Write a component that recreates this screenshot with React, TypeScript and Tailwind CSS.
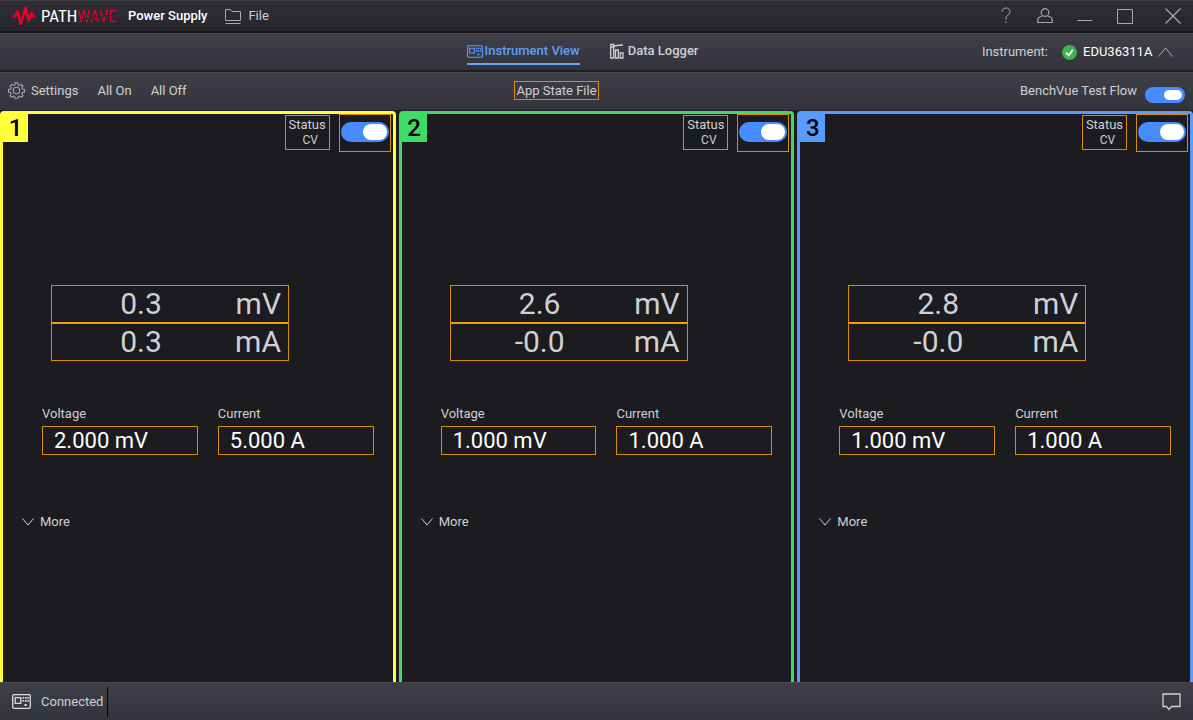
import { useId } from 'react'
import type { ReactNode } from 'react'
import clsx from 'clsx'

interface Channel {
  id: number
  border: string
  badge: string
  volts: string
  amps: string
  voltage: string
  current: string
}

const CHANNELS: Channel[] = [
  { id: 1, border: 'border-[#ffff3c]', badge: 'bg-[#ffff3c]', volts: '0.3', amps: '0.3', voltage: '2.000 mV', current: '5.000 A' },
  { id: 2, border: 'border-[#3ddc68]', badge: 'bg-[#3ddc68]', volts: '2.6', amps: '-0.0', voltage: '1.000 mV', current: '1.000 A' },
  { id: 3, border: 'border-[#5a9bff]', badge: 'bg-[#5a9bff]', volts: '2.8', amps: '-0.0', voltage: '1.000 mV', current: '1.000 A' },
]

const BAR = 'bg-linear-to-b from-[#3f4047] to-[#33343b] border-t border-t-[#4b4c53]'

export default function App() {
  return (
    <div className="flex min-h-screen flex-col bg-[#1c1b20] font-[Roboto,sans-serif] text-[13px] leading-5 text-[#cfd0d3]">
      <TitleBar />
      <NavBar />
      <Toolbar />
      <main className="grid flex-1 grid-cols-3 gap-[3px] bg-[#1c1b20]">
        {CHANNELS.map((channel) => (
          <ChannelPanel key={channel.id} channel={channel} />
        ))}
      </main>
      <StatusBar />
    </div>
  )
}

function TitleBar() {
  return (
    <header className="flex h-[33px] items-center justify-between border-t border-b-2 border-t-[#3e3e44] border-b-[#17171b] bg-linear-to-b from-[#2e2e34] to-[#26262b] px-3">
      <div className="flex items-center">
        <svg width="24" height="20" viewBox="0 0 24 20" fill="none" stroke="#e90029" strokeWidth="2.6" strokeLinejoin="round" strokeLinecap="round">
          <path d="M1.300 10.500h1.700L5.500 5l3.200 12.700L13.500 1.800l3.200 13L19.500 7l1.500 3.500h1.600" />
        </svg>
        <div className="ml-[5px] w-[76px] font-['Liberation_Sans_Narrow','Roboto_Condensed',Roboto,sans-serif] text-[17px] text-white">
          PATH
          <span className="bg-[linear-gradient(172deg,#e90029_52%,transparent_52%,transparent_58%,#e90029_58%)] bg-clip-text text-transparent">WAVE</span>
        </div>
        <h1 className="ml-[11px] font-medium text-white">Power Supply</h1>
        <button className="ml-[18px] flex items-center gap-[7px]">
          <FolderIcon />
          File
        </button>
      </div>
      <div className="flex items-center gap-6 text-[#a6a9b0]">
        <button aria-label="Help">
          <svg width="14" height="18" viewBox="0 0 14 18" fill="none" stroke="currentColor">
            <path d="M3 5c0-2.500 1.700-4 4-4s4 1.500 4 3.800c0 3-4 3.200-4 6.200v1.500M7 14.500V16" />
          </svg>
        </button>
        <button aria-label="Account">
          <svg width="16" height="18" viewBox="0 0 16 18" fill="none" stroke="currentColor" strokeWidth="1.200">
            <circle cx="8" cy="5.500" r="3.800" />
            <path d="M5.500 9C3 9.500.7 11 .7 13.500v2h14.600v-2C15.300 11 13 9.500 10.500 9" />
          </svg>
        </button>
        <button aria-label="Minimize">
          <svg width="16" height="18" viewBox="0 0 16 18" fill="none" stroke="currentColor">
            <path d="M.5 13.500h15" />
          </svg>
        </button>
        <button aria-label="Maximize">
          <svg width="16" height="18" viewBox="0 0 16 18" fill="none" stroke="currentColor">
            <path d="M.5 2.500h15v14H.5z" />
          </svg>
        </button>
        <button aria-label="Close" className="ml-2">
          <svg width="16" height="18" viewBox="0 0 16 18" fill="none" stroke="currentColor" strokeWidth="1.200">
            <path d="M.5 1.500l15 15M15.500 1.500l-15 15" />
          </svg>
        </button>
      </div>
    </header>
  )
}

function NavBar() {
  return (
    <div className={clsx(BAR, 'grid h-[39px] grid-cols-[1fr_auto_1fr] items-center border-b-2 border-b-[#1c1c21]')}>
      <nav className="col-start-2 mr-7 flex gap-[30px] font-medium">
        <button className="flex h-[26px] items-center gap-0.5 border-b-2 border-[#6aa5ff] text-[#5f9dfd]">
          <InstrumentIcon className="h-[13px] w-4" />
          Instrument View
        </button>
        <button className="flex h-[26px] items-center gap-1 border-b-2 border-transparent">
          <LoggerIcon />
          Data Logger
        </button>
      </nav>
      <div className="flex items-center justify-self-end pr-5">
        <label htmlFor="instrument">Instrument:</label>
        <svg className="mr-1.5 ml-3.5" width="15" height="15" viewBox="0 0 15 15" fill="none">
          <circle cx="7.500" cy="7.500" r="7.500" fill="#3db54a" />
          <path d="M4 7.700l2.600 2.700 4.300-5.600" stroke="#fff" strokeWidth="1.700" />
        </svg>
        <div className="relative flex items-center">
          <select id="instrument" className="appearance-none bg-transparent pr-5 text-white">
            <option>EDU36311A</option>
          </select>
          <svg className="pointer-events-none absolute right-0" width="15" height="10" viewBox="0 0 15 10" fill="none" stroke="#a6a9b0">
            <path d="M.5 9.500l7-8.500 7 8.500" />
          </svg>
        </div>
      </div>
    </div>
  )
}

function Toolbar() {
  return (
    <div className={clsx(BAR, 'grid h-[39px] grid-cols-[1fr_auto_1fr] items-center border-b border-b-[#22222a] px-2 pb-0.5')}>
      <div className="flex items-center gap-[19px]">
        <button className="flex items-center gap-1.5">
          <GearIcon />
          Settings
        </button>
        <button>All On</button>
        <button>All Off</button>
      </div>
      <button className="mr-20 border border-[#d98c0c] px-px leading-[17px]">App State File</button>
      <label className="flex items-center gap-2 justify-self-end">
        BenchVue Test Flow
        <input
          type="checkbox"
          role="switch"
          defaultChecked
          className="mt-2 flex h-4 w-10 appearance-none items-center justify-end rounded-full bg-[#468bff] px-[3px] before:h-2.5 before:w-[18px] before:rounded-full before:bg-white"
        />
      </label>
    </div>
  )
}

function ChannelPanel({ channel }: { channel: Channel }) {
  return (
    <section className={clsx('flex flex-col rounded-t-sm border-x-[3px] border-t-[3px]', channel.border)}>
      <div className="flex h-[38px] items-start pr-0.5">
        <h2 className={clsx('h-7 w-[25px] text-center text-2xl leading-7 font-medium text-black', channel.badge)}>{channel.id}</h2>
        <div className="mt-px ml-auto h-[35px] w-[45px] border border-[#d98c0c] text-center leading-[18px]">
          Status
          <div className="pl-1.5 text-xs leading-3">CV</div>
        </div>
        <div className="ml-[9px] flex h-[38px] w-[52px] items-center justify-center border border-[#d98c0c] pb-0.5">
          <input
            type="checkbox"
            role="switch"
            defaultChecked
            aria-label={`Output ${channel.id}`}
            className="flex h-5 w-12 appearance-none items-center justify-end rounded-full bg-[#468bff] px-0.5 before:h-4 before:w-6 before:rounded-full before:bg-white"
          />
        </div>
      </div>

      {/* Measured values */}
      <div className="mt-[133px] ml-12 w-[238px] border border-[#d98c0c] text-3xl">
        <Readout value={channel.volts} unit="mV" />
        <div className="h-0.5 bg-[#f59e0b]" />
        <Readout value={channel.amps} unit="mA" />
      </div>

      {/* Setpoints */}
      <div className="mt-[43px] grid grid-cols-2 gap-5 pr-[19px] pl-[39px]">
        <Field label="Voltage" value={channel.voltage} />
        <Field label="Current" value={channel.current} />
      </div>

      <button className="mt-[57px] mb-6 ml-[19px] flex items-center gap-1.5 self-start">
        <svg width="12" height="8" viewBox="0 0 12 8" fill="none" stroke="currentColor">
          <path d="M.5.5L6 7 11.500.5" />
        </svg>
        More
      </button>
    </section>
  )
}

function Readout({ value, unit }: { value: string; unit: string }) {
  return (
    <div className="flex h-9 items-center pr-[7px]">
      <span className="w-[178px] text-center">{value}</span>
      <span className="ml-auto">{unit}</span>
    </div>
  )
}

function Field({ label, value }: { label: string; value: string }) {
  const id = useId()
  return (
    <div className="flex flex-col gap-0.5">
      <label htmlFor={id}>{label}</label>
      <input
        id={id}
        defaultValue={value}
        className="h-[29px] w-full min-w-0 border border-[#d98c0c] bg-transparent px-[11px] text-[22px] text-white"
      />
    </div>
  )
}

function StatusBar() {
  return (
    <footer className={clsx(BAR, 'flex h-[38px] items-center justify-between px-3')}>
      <div className="flex h-[30px] items-center gap-2.5 border-r border-black pr-1">
        <InstrumentIcon className="h-[15px] w-[19px] text-[#dddddf]" />
        Connected
      </div>
      <button aria-label="Messages">
        <svg width="19" height="18" viewBox="0 0 19 18" fill="none" stroke="#d0d1d4" strokeWidth="1.300">
          <path d="M1 1h17v12.500H9.500L7 16.500 4.500 13.500H1z" />
        </svg>
      </button>
    </footer>
  )
}

function Icon({ children, size }: { children: ReactNode; size: number }) {
  return (
    <svg width={size} height={size} viewBox="0 0 16 16" fill="none" stroke="#a6a9b0">
      {children}
    </svg>
  )
}

function FolderIcon() {
  return (
    <Icon size={16}>
      <path d="M.5 12.500v-11h5l1.500 2h8.500v9zM.5 15.500h15" />
    </Icon>
  )
}

function GearIcon() {
  return (
    <Icon size={17}>
      <circle cx="8" cy="8" r="3" />
      <path d="M6.800.8h2.400l.4 2 1.200.5 1.700-1.100 1.600 1.600-1.100 1.700.5 1.200 2 .4v2.400l-2 .4-.5 1.200 1.100 1.700-1.600 1.600-1.700-1.100-1.200.5-.4 2H6.800l-.4-2-1.200-.5-1.700 1.100-1.600-1.600L3 11.100l-.5-1.200-2-.4V7.100l2-.4L3 5.500 1.900 3.800l1.600-1.600 1.700 1.100 1.200-.5z" />
    </Icon>
  )
}

function LoggerIcon() {
  return (
    <svg width="14" height="16" viewBox="0 0 14 16" fill="none" stroke="currentColor" strokeWidth="1.300">
      <path d="M.7 1.500h3V15h-3zM5.500 7h2.800v8H5.500zM10.200 10H13v5h-2.800zM.7 5C4 2.500 8 2 13 2" />
    </svg>
  )
}

function InstrumentIcon({ className }: { className: string }) {
  return (
    <svg className={className} viewBox="0 0 19 15" fill="none" stroke="currentColor" strokeWidth="1.300">
      <rect x=".7" y=".7" width="17.600" height="13.600" rx="1" />
      <path d="M3.200 3.700h5.600v5.600H3.200z" />
      <path d="M10.500 3h1.700v1.700h-1.700zM13 3h1.700v1.700H13zM15.500 3h1.500v1.700h-1.500zM10.500 6h1.700v1.700h-1.700zM13 6h1.700v1.700H13zM15.500 6h1.500v1.700h-1.500zM12.500 10h2.200v2h-2.200z" fill="currentColor" stroke="none" />
    </svg>
  )
}
